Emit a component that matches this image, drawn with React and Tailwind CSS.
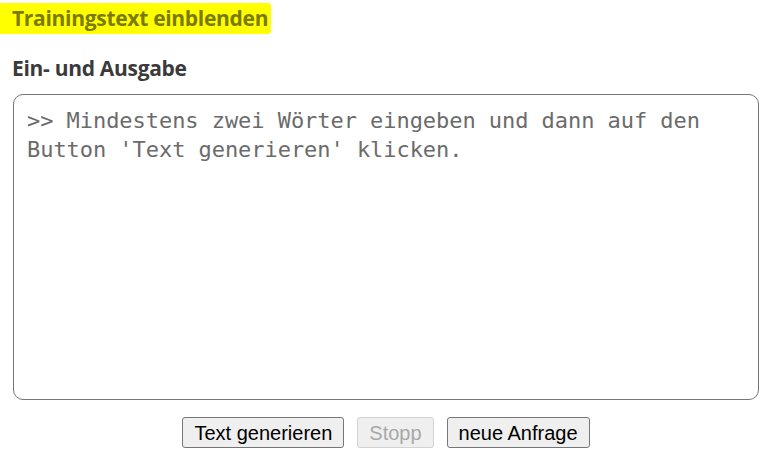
export default function App() {
  return (
    <div className="w-[769px] h-[460px] bg-white font-['Open_Sans','Lato',sans-serif] overflow-hidden">
      {/* highlighted toggle */}
      <div className="pt-[3px]">
        <span className="inline-block bg-[#ffff00] pl-[12px] pr-[3px] h-[31px] leading-[31px] text-[21px] font-bold text-[#7a7a00] rounded-r-[3px] tracking-[-0.3px]">
          Trainingstext einblenden
        </span>
      </div>

      <h2 className="mt-[21px] ml-[12px] text-[21px] leading-[27px] font-bold text-[#3a3a3a] tracking-[-0.3px]">
        Ein- und Ausgabe
      </h2>

      <div className="mt-[12px] ml-[13px] mr-[10px] h-[306px] border border-[#767676] rounded-[10px] px-[13px] pt-[11px]">
        <p className="font-['DejaVu_Sans_Mono','Liberation_Mono',monospace] text-[22px] leading-[29px] tracking-[-0.05px] text-[#6b6b6b] whitespace-pre-wrap">
          {">> Mindestens zwei Wörter eingeben und dann auf den Button 'Text generieren' klicken."}
        </p>
      </div>

      <div className="mt-[17px] pl-[3px] flex justify-center gap-[13px] font-['Liberation_Sans',Arial,sans-serif] text-[20px]">
        <button className="h-[31px] px-[11px] bg-[#efefef] border border-[#767676] rounded-[3px] text-black">
          Text generieren
        </button>
        <button disabled className="h-[31px] px-[11px] bg-[#efefef] border border-[#d3d3d3] rounded-[3px] text-[#a8a8a8]">
          Stopp
        </button>
        <button className="h-[31px] px-[11px] bg-[#efefef] border border-[#767676] rounded-[3px] text-black">
          neue Anfrage
        </button>
      </div>
    </div>
  );
}
